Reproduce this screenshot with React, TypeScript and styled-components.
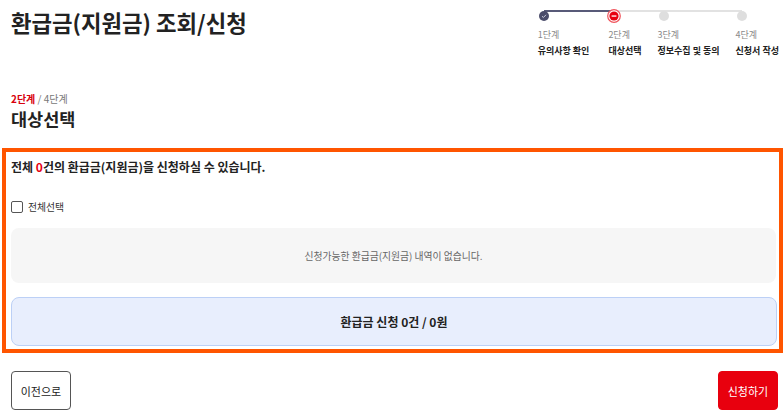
import React from "react";
import styled, { createGlobalStyle } from "styled-components";

const Global = createGlobalStyle`
  html, body { margin: 0; padding: 0; background: #fff; }
  body { font-family: "Noto Sans CJK KR", "Noto Sans", sans-serif; color: #222; }
  * { box-sizing: border-box; }
`;

const Page = styled.div`
  width: 784px;
  height: 418px;
  padding: 0 6px 0 11px;
  overflow: hidden;
`;

const Header = styled.header`
  display: flex;
  justify-content: space-between;
  align-items: flex-start;
  height: 93px;
`;

const Title = styled.h1`
  margin: 8px 0 0;
  font-size: 22.3px;
  font-weight: 700;
  line-height: 28px;
`;

const Stepper = styled.ol`
  display: flex;
  gap: 16px;
  list-style: none;
  margin: 4px -1px 0 0;
  padding: 0;
`;

const Step = styled.li<{ $done?: boolean; $last?: boolean; $wide?: boolean }>`
  position: relative;
  display: flex;
  flex-direction: column;
  padding-right: ${(p) => (p.$wide ? "3px" : "0")};
  &::before {
    content: "";
    display: ${(p) => (p.$last ? "none" : "block")};
    position: absolute;
    top: 6px;
    left: 6px;
    right: -22px;
    height: 2px;
    background: ${(p) => (p.$done ? "#585a78" : "#e2e2e2")};
  }
`;

const DotWrap = styled.span`
  position: relative;
  z-index: 1;
  display: block;
  width: 14px;
  height: 14px;
  margin-left: -1px;
`;

const StepNum = styled.span`
  margin-top: 11px;
  font-size: 9px;
  line-height: 12px;
  color: #8a8a8a;
`;

const StepName = styled.span`
  margin-top: 4px;
  font-size: 9px;
  font-weight: 700;
  line-height: 12px;
  color: #222;
  white-space: nowrap;
`;

const Progress = styled.div`
  font-size: 10px;
  line-height: 12px;
  color: #777;
`;

const Current = styled.span`
  color: #d8000c;
  font-weight: 700;
`;

const SubTitle = styled.h2`
  margin: 2px 0 0;
  font-size: 17.5px;
  font-weight: 700;
  line-height: 24px;
`;

const Highlight = styled.section`
  margin: 17px -5px 0 -9px;
  border: 4px solid #ff5500;
  padding: 7px 2px 3px 5px;
`;

const Lead = styled.p`
  margin: 0;
  font-size: 12px;
  font-weight: 700;
  line-height: 16px;
`;

const Red = styled.span`
  color: #e60012;
`;

const CheckRow = styled.label`
  display: flex;
  align-items: center;
  gap: 5px;
  margin-top: 25px;
  font-size: 9.8px;
  color: #333;
  line-height: 14px;
`;

const Box = styled.span`
  width: 12px;
  height: 12px;
  border: 1px solid #555;
  border-radius: 2px;
  background: #fff;
`;

const Empty = styled.div`
  margin-top: 14px;
  margin-right: 1px;
  height: 55px;
  border-radius: 8px;
  background: #f6f6f6;
  display: flex;
  align-items: center;
  justify-content: center;
  font-size: 9.8px;
  color: #666;
`;

const Total = styled.div`
  margin-top: 14px;
  height: 49px;
  border: 1px solid #bcd0f6;
  border-radius: 8px;
  background: #e8eefd;
  display: flex;
  align-items: center;
  justify-content: center;
  font-size: 12px;
  font-weight: 700;
  color: #222;
`;

const Footer = styled.div`
  display: flex;
  justify-content: space-between;
  margin-top: 18px;
`;

const Button = styled.button<{ $primary?: boolean }>`
  width: 60px;
  height: 39px;
  border-radius: 4px;
  font-family: inherit;
  font-size: 11px;
  cursor: pointer;
  border: 1px solid ${(p) => (p.$primary ? "#e8000e" : "#555")};
  background: ${(p) => (p.$primary ? "#e8000e" : "#fff")};
  color: ${(p) => (p.$primary ? "#fff" : "#222")};
`;

const DoneDot = () => (
  <DotWrap>
    <svg width="14" height="14" viewBox="0 0 14 14">
      <circle cx="7" cy="7" r="5" fill="#4a4c6a" />
      <path d="M5 7.2 L6.4 8.5 L9 5.8" stroke="#c9cadb" strokeWidth="1" fill="none" />
    </svg>
  </DotWrap>
);

const ActiveDot = () => (
  <DotWrap>
    <svg width="14" height="14" viewBox="0 0 14 14">
      <circle cx="7" cy="7" r="6.3" fill="#fff" stroke="#f0545c" strokeWidth="1.2" />
      <circle cx="7" cy="7" r="4.6" fill="#e8000e" />
      <rect x="4.6" y="6.4" width="4.8" height="1.3" fill="#fff" />
    </svg>
  </DotWrap>
);

const IdleDot = () => (
  <DotWrap>
    <svg width="14" height="14" viewBox="0 0 14 14">
      <circle cx="7" cy="7" r="5" fill="#dedede" />
    </svg>
  </DotWrap>
);

const steps = [
  { n: "1단계", name: "유의사항 확인", state: "done" },
  { n: "2단계", name: "대상선택", state: "active" },
  { n: "3단계", name: "정보수집 및 동의", state: "idle" },
  { n: "4단계", name: "신청서 작성", state: "idle" },
];

export default function App() {
  return (
    <Page>
      <Global />
      <Header>
        <Title>환급금(지원금) 조회/신청</Title>
        <Stepper>
          {steps.map((s, i) => (
            <Step
              key={s.n}
              $done={s.state === "done"}
              $last={i === steps.length - 1}
              $wide={i === 0}
            >
              {s.state === "done" ? <DoneDot /> : s.state === "active" ? <ActiveDot /> : <IdleDot />}
              <StepNum>{s.n}</StepNum>
              <StepName>{s.name}</StepName>
            </Step>
          ))}
        </Stepper>
      </Header>
      <Progress>
        <Current>2단계</Current> / 4단계
      </Progress>
      <SubTitle>대상선택</SubTitle>
      <Highlight>
        <Lead>
          전체 <Red>0</Red>건의 환급금(지원금)을 신청하실 수 있습니다.
        </Lead>
        <CheckRow>
          <Box />
          전체선택
        </CheckRow>
        <Empty>신청가능한 환급금(지원금) 내역이 없습니다.</Empty>
        <Total>환급금 신청 0건 / 0원</Total>
      </Highlight>
      <Footer>
        <Button>이전으로</Button>
        <Button $primary>신청하기</Button>
      </Footer>
    </Page>
  );
}
